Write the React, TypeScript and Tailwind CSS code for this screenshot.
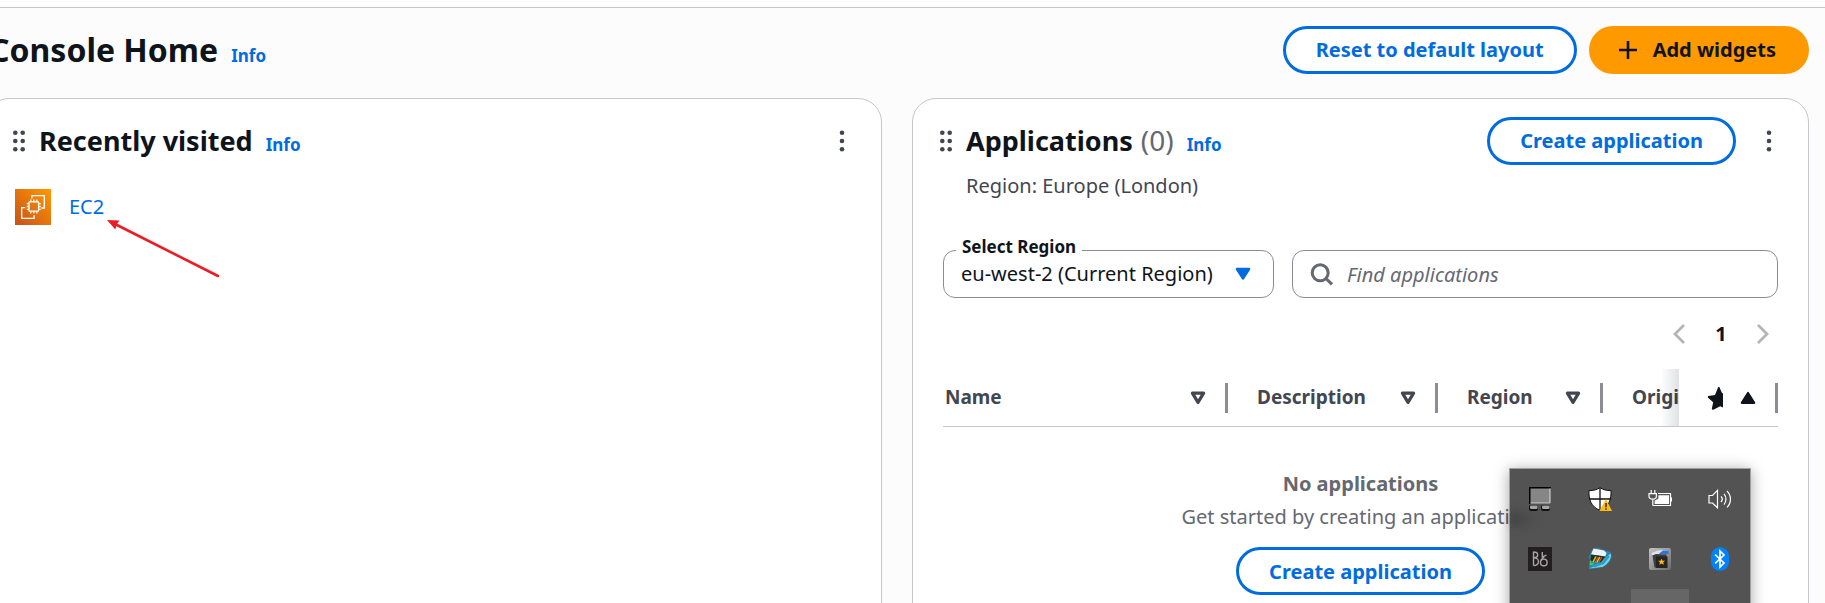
import type { ReactNode } from "react";

function InfoLink({ about }: { about: string }) {
  return (
    <a href="#info" aria-label={`Info about ${about}`} className="text-[17px] font-bold text-[#006ce0]">
      Info
    </a>
  );
}

function OutlineButton({ children }: { children: ReactNode }) {
  return (
    <button
      type="button"
      className="h-12 shrink-0 rounded-full border-3 border-[#006ce0] bg-white px-[30px] text-[20px] font-bold whitespace-nowrap text-[#006ce0]"
    >
      {children}
    </button>
  );
}

function DragHandle() {
  return (
    <button type="button" aria-label="Move widget" className="flex items-center">
      <svg width="12" height="22" viewBox="0 0 12 22" fill="#424650">
        {[2.8, 11, 19.2].map((y) => (
          <g key={y}>
            <circle cx="2.3" cy={y} r="2.3" />
            <circle cx="9.7" cy={y} r="2.3" />
          </g>
        ))}
      </svg>
    </button>
  );
}

function Kebab() {
  return (
    <button type="button" aria-label="Widget actions" className="flex items-center">
      <svg width="6" height="22" viewBox="0 0 6 22" fill="#424650">
        <circle cx="3" cy="2.8" r="2.3" />
        <circle cx="3" cy="11" r="2.3" />
        <circle cx="3" cy="19.2" r="2.3" />
      </svg>
    </button>
  );
}

function WidgetHeader({ title, count, action }: { title: string; count?: string; action?: ReactNode }) {
  return (
    <div className="flex h-12 items-center pr-9 pl-[27px]">
      <DragHandle />
      <div className="ml-[14px] flex flex-1 items-baseline gap-[13px]">
        <h2 className="text-[27px] leading-9 font-bold">
          {title}
          {count && <span className="ml-2 text-[28px] leading-8 font-normal text-[#656871]">{count}</span>}
        </h2>
        <InfoLink about={title} />
      </div>
      <div className="flex items-center gap-[30px]">
        {action}
        <Kebab />
      </div>
    </div>
  );
}

function Card({ children }: { children: ReactNode }) {
  return <section className="min-w-0 rounded-[24px] border border-[#c6c6cd] bg-white pt-[18px]">{children}</section>;
}

function SortIcon() {
  return (
    <svg width="16" height="14" viewBox="0 0 16 14" className="shrink-0">
      <path d="M2.4 2.2H13.6L8 11.4Z" fill="none" stroke="#424650" strokeWidth="3.2" strokeLinejoin="round" />
    </svg>
  );
}

function HeaderCell({ label }: { label: string }) {
  return (
    <th scope="col" className="border-b border-[#c6c6cd] p-0">
      <div className="flex h-[30px] items-center border-r-3 border-[#8c8c94]">
        <span className="flex-1 text-left">{label}</span>
        <button type="button" aria-label={`Sort by ${label}`} className="mr-[19px]">
          <SortIcon />
        </button>
      </div>
    </th>
  );
}

function ApplicationsTable() {
  return (
    <table className="w-full table-fixed border-separate border-spacing-0 text-[20px] text-[#424650]">
      <colgroup>
        <col />
        <col className="w-[210px]" />
        <col className="w-[165px]" />
        <col className="w-[76px]" />
        <col className="w-[99px]" />
      </colgroup>
      <thead>
        <tr className="text-[19px] font-bold [&>th:first-child_span]:pl-0.5 [&>th:not(:first-child)_span]:pl-[29px]">
          <HeaderCell label="Name" />
          <HeaderCell label="Description" />
          <HeaderCell label="Region" />
          <th scope="col" className="overflow-hidden border-b border-[#c6c6cd] p-0">
            <div className="relative flex h-[57px] items-center overflow-hidden">
              <span className="whitespace-nowrap">Origin</span>
              <div className="absolute inset-y-0 right-0 w-[18px] bg-linear-to-l from-[#000716]/12 to-transparent" />
            </div>
          </th>
          <th scope="col" className="border-b border-[#c6c6cd] p-0">
            <div className="flex h-[30px] items-center border-r-3 border-[#8c8c94] pr-[19px]">
              <svg width="16" height="24" viewBox="0 0 16 24" className="ml-7 shrink-0" role="img" aria-label="Favorite">
                <path
                  d="M12.2 0.8L14.9 6.8L16 7.4V21.6L13.2 20.3L5.8 24L4.8 22.8L6.2 16.2L0.8 11.4L1.2 10L8 9L11.2 1.1Z"
                  fill="#0f141a"
                />
              </svg>
              <button type="button" aria-label="Sorted by favorite" className="ml-auto">
                <svg width="16" height="14" viewBox="0 0 16 14">
                  <path d="M8 2L14.2 11.8H1.8Z" fill="#0f141a" stroke="#0f141a" strokeWidth="2.2" strokeLinejoin="round" />
                </svg>
              </button>
            </div>
          </th>
        </tr>
      </thead>
      <tbody>
        <tr>
          <td colSpan={5} className="p-0 pt-10 pb-12 text-center leading-[33px] text-[#656871]">
            <p className="font-bold">No applications</p>
            <p>Get started by creating an application.</p>
            <div className="mt-[14px]">
              <OutlineButton>Create application</OutlineButton>
            </div>
          </td>
        </tr>
      </tbody>
    </table>
  );
}

function Ec2Icon() {
  return (
    <svg width="36" height="36" viewBox="0 0 36 36" fill="none">
      <defs>
        <linearGradient id="ec2" x1="0" y1="36" x2="36" y2="0" gradientUnits="userSpaceOnUse">
          <stop stopColor="#c8511b" />
          <stop offset="1" stopColor="#ff9900" />
        </linearGradient>
      </defs>
      <rect width="36" height="36" fill="url(#ec2)" />
      <g stroke="#fff" strokeWidth="1.3">
        <path d="M16.9 9.6V6.7H29.3V19H26.2" />
        <path d="M10.2 18.7H6.7V29.4H19.1V26.2" />
        <rect x="14" y="12.8" width="9.6" height="9.4" rx="0.6" />
        <path d="M15.8 10.5V12.8M18.8 10.5V12.8M21.8 10.5V12.8M15.8 22.2V24.5M18.8 22.2V24.5M21.8 22.2V24.5M11.8 14.6H14M11.8 17.5H14M11.8 20.4H14M23.6 14.6H25.8M23.6 17.5H25.8M23.6 20.4H25.8" />
      </g>
    </svg>
  );
}

function TrayButton({ label, children }: { label: string; children: ReactNode }) {
  return (
    <button type="button" aria-label={label} className="flex h-[60px] items-center justify-center">
      <svg width="24" height="24" viewBox="0 0 24 24" fill="none">
        {children}
      </svg>
    </button>
  );
}

function SystemTray() {
  return (
    <div className="absolute top-[468px] right-[74px] w-[242px] border border-[#a0a0a0] bg-[#535353] shadow-[0_2px_14px_rgba(0,0,0,0.35)]">
      <div className="absolute top-[42px] left-0 h-4 w-7 bg-linear-to-r from-black/20 to-transparent blur-[4px]" />
      <div className="relative grid grid-cols-4">
        <TrayButton label="Touchpad">
          <rect x="1" y="0" width="22" height="17" fill="#000" />
          <rect x="2.5" y="1.5" width="20" height="15" fill="#868686" />
          <path d="M2.5 16H22V1.5" stroke="#d0d0d0" strokeWidth="1.2" />
          <rect x="1" y="18" width="9" height="6" rx="2" fill="#111" />
          <rect x="13" y="18" width="9" height="6" rx="2" fill="#111" />
          <rect x="2" y="18.6" width="7.6" height="3.4" rx="1.2" fill="#a6a6a6" />
          <rect x="14" y="18.6" width="7.6" height="3.4" rx="1.2" fill="#a6a6a6" />
        </TrayButton>
        <TrayButton label="Windows Security">
          <path
            d="M12 0.7C9 2.8 5 3.6 1 3.6C0.6 12.5 3 19.6 12 23.4C21 19.6 23.4 12.5 23 3.6C19 3.6 15 2.8 12 0.7Z"
            fill="#fff"
            stroke="#111"
            strokeWidth="1"
          />
          <path d="M12 1V23M1 12H23" stroke="#111" strokeWidth="1.3" />
          <path d="M18 12L24 24H11.4Z" fill="#fcbc12" />
          <path d="M18 16V20.2M18 21.3V22.8" stroke="#222" strokeWidth="1.4" />
        </TrayButton>
        <TrayButton label="Battery">
          <path d="M3.2 3V6.5M6.8 3V6.5M1 6.6H8.4V9C8.4 11 7 12.2 4.8 12.2C2.5 12.2 1 11 1 9ZM4.8 12.2V18.5" stroke="#fff" strokeWidth="1.2" />
          <path d="M10 6.5H22.5V18.5H4.8" stroke="#fff" strokeWidth="1.2" />
          <rect x="23" y="10.5" width="1.2" height="4" fill="#fff" />
          <path d="M10.4 8.2H21V17H6.6V13.8L10.4 11.4Z" fill="#fff" />
        </TrayButton>
        <TrayButton label="Volume">
          <path d="M1 8.5H4.5L9.5 3.4V20.8L4.5 16H1Z" stroke="#fff" strokeWidth="1.2" />
          <path d="M13 9.4C14.5 11 14.5 13.4 13 15M16 6.8C18.6 9.8 18.6 14.6 16 17.6M19 4C23.6 8.6 23.6 15.8 19 20.4" stroke="#fff" strokeWidth="1.2" />
        </TrayButton>
        <TrayButton label="Audio control">
          <rect width="24" height="24" fill="#231f20" />
          <g stroke="#a8a4a4" strokeWidth="1.4">
            <path d="M5.5 4.5V18.5M5.5 5C11 5 11 10.5 6 10.8C12 11 12 18.3 5.5 18.5" />
            <circle cx="15.8" cy="15.4" r="3.3" />
            <path d="M12.8 13.5L16.2 9.5M14.3 5V9.8L18.5 8.2" />
          </g>
        </TrayButton>
        <TrayButton label="Backup drive">
          <path d="M0.5 10L4 3L9 0.6L22 5C25.5 8 23 14 18 18.5L6 21.8L0.5 21.5L2.5 14Z" fill="#2487ad" />
          <path d="M0.8 21.6L11 17.5L17.5 11L22.5 6.5C24.5 11 20 17 14.5 20Z" fill="#74d2e6" />
          <path d="M4 18.5L13.5 15.5L20 8.5L21.8 9.5L16 17L6 20.6Z" fill="#2d9cc4" />
          <path d="M5.5 1.6L16 3.4L18.5 6L17.2 9.4L3 7.6Z" fill="#eef1f5" />
          <path d="M3 7.6L17.2 9.4L13 15.2L2.4 14Z" fill="#2a2c1c" />
          <path d="M5 15L8 9.5M8.8 15.5L11.8 10" stroke="#e4c81e" strokeWidth="1.5" />
          <path d="M7 15.5L10 10M11 15L13.8 10.4" stroke="#d2502a" strokeWidth="1.2" />
          <path d="M2.6 13.5L2.4 17.5L5.5 16.5" stroke="#4fc878" strokeWidth="1.4" />
        </TrayButton>
        <TrayButton label="Media utility">
          <defs>
            <linearGradient id="media" x1="0" y1="0" x2="1" y2="1">
              <stop stopColor="#c4c4c4" />
              <stop offset="1" stopColor="#6c6c6c" />
            </linearGradient>
          </defs>
          <rect x="1" y="1" width="22" height="22" rx="2" fill="url(#media)" />
          <path d="M3.5 6L10 3.2H20V6.5L12 8H4Z" fill="#dce4ee" />
          <path d="M11 6.6L15 3.6H20.5V7H12Z" fill="#2f73dc" />
          <path d="M4.5 8.5L8 7L18.5 7.5V10L9.5 11V21L6.5 20.5Z" fill="#3c3c3c" />
          <rect x="8" y="9.5" width="11.5" height="11.5" fill="#252525" />
          <path d="M13.6 11.4L14.6 13.7H17.1L15.2 15.3L15.9 17.8L13.6 16.4L11.3 17.8L12 15.3L10.1 13.7H12.6Z" fill="#fbb916" />
        </TrayButton>
        <TrayButton label="Bluetooth">
          <rect x="3" y="0" width="18" height="24" rx="9" fill="#0082fc" />
          <path d="M7.2 7.6L16 16L12 20V4L16 8L7.2 16.4" stroke="#fff" strokeWidth="1.7" />
        </TrayButton>
        <div className="col-start-3 mx-px h-15 bg-[#666666]" />
      </div>
    </div>
  );
}

export default function App() {
  return (
    <div className="relative h-screen overflow-hidden bg-[#fcfcfd] font-['Noto_Sans',sans-serif] text-[20px] text-[#0f141a]">
      <div className="h-2 border-b border-[#c6c6cd] bg-white" />
      <main className="-ml-[15px] pt-[18px] pr-4">
        <header className="flex h-12 items-center justify-between pl-1">
          <div className="flex items-baseline gap-[13px]">
            <h1 className="text-[32px] leading-10 font-bold">Console Home</h1>
            <InfoLink about="Console Home" />
          </div>
          <div className="flex gap-3">
            <OutlineButton>Reset to default layout</OutlineButton>
            <button
              type="button"
              className="flex h-12 items-center gap-4 rounded-full bg-[#ff9900] pr-[33px] pl-[30px] text-[20px] font-bold whitespace-nowrap"
            >
              <svg width="18" height="18" viewBox="0 0 18 18">
                <path d="M9 0V18M0 9H18" stroke="#0f141a" strokeWidth="2.6" />
              </svg>
              Add widgets
            </button>
          </div>
        </header>

        <div className="mt-6 grid grid-cols-2 gap-[30px]">
          <Card>
            <WidgetHeader title="Recently visited" />
            <a href="#ec2" className="mt-6 flex items-center gap-[18px] px-[29px] text-[#006ce0]">
              <Ec2Icon />
              EC2
            </a>
            <svg width="114" height="60" viewBox="0 0 114 60" className="absolute top-[219px] left-[106px]">
              <path d="M8 4.5L112 57" stroke="#ed1c24" strokeWidth="2.6" strokeLinecap="round" />
              <path d="M1 1L13.5 1.5L10.8 5.2L9.3 10.4Z" fill="#ed1c24" />
            </svg>
          </Card>

          <Card>
            <WidgetHeader
              title="Applications"
              count="(0)"
              action={<OutlineButton>Create application</OutlineButton>}
            />
            <p className="mt-[6px] pl-[53px] leading-[30px] text-[#424650]">Region: Europe (London)</p>
            <div className="px-[30px] pt-[49px]">
              <div className="flex gap-[18px]">
                <div className="relative w-[331px] shrink-0">
                  <label
                    htmlFor="region"
                    className="absolute -top-[15px] left-[13px] bg-white px-[6px] text-[17px] leading-6 font-bold"
                  >
                    Select Region
                  </label>
                  <select
                    id="region"
                    className="h-12 w-full appearance-none rounded-xl border border-[#8c8c94] bg-transparent pr-12 pl-[17px] text-[20px]"
                  >
                    <option>eu-west-2 (Current Region)</option>
                  </select>
                  <svg
                    width="16"
                    height="14"
                    viewBox="0 0 16 14"
                    className="pointer-events-none absolute top-[17px] right-[23px]"
                  >
                    <path d="M2 2H14L8 11.4Z" fill="#006ce0" stroke="#006ce0" strokeWidth="2.6" strokeLinejoin="round" />
                  </svg>
                </div>
                <div className="relative flex-1">
                  <svg width="24" height="24" viewBox="0 0 24 24" className="absolute top-3 left-[18px]" fill="none" stroke="#656871" strokeWidth="3">
                    <circle cx="10.2" cy="10.8" r="8" />
                    <path d="M15.8 16.4L22 22.4" />
                  </svg>
                  <input
                    type="search"
                    aria-label="Find applications"
                    placeholder="Find applications"
                    className="h-12 w-full rounded-xl border border-[#8c8c94] pl-[54px] text-[20px] placeholder:text-[#656871] placeholder:italic"
                  />
                </div>
              </div>

              <nav aria-label="Pagination" className="mt-[21px] flex h-[30px] items-center justify-end pr-[9px]">
                <button type="button" aria-label="Previous page">
                  <svg width="12" height="20" viewBox="0 0 12 20" fill="none" stroke="#b4b4bb" strokeWidth="2.8">
                    <path d="M11 1L2 10L11 19" />
                  </svg>
                </button>
                <button type="button" className="w-[72px] text-center font-bold">
                  1
                </button>
                <button type="button" aria-label="Next page">
                  <svg width="12" height="20" viewBox="0 0 12 20" fill="none" stroke="#b4b4bb" strokeWidth="2.8">
                    <path d="M1 1L10 10L1 19" />
                  </svg>
                </button>
              </nav>

              <div className="mt-5">
                <ApplicationsTable />
              </div>
            </div>
          </Card>
        </div>
      </main>
      <SystemTray />
    </div>
  );
}
